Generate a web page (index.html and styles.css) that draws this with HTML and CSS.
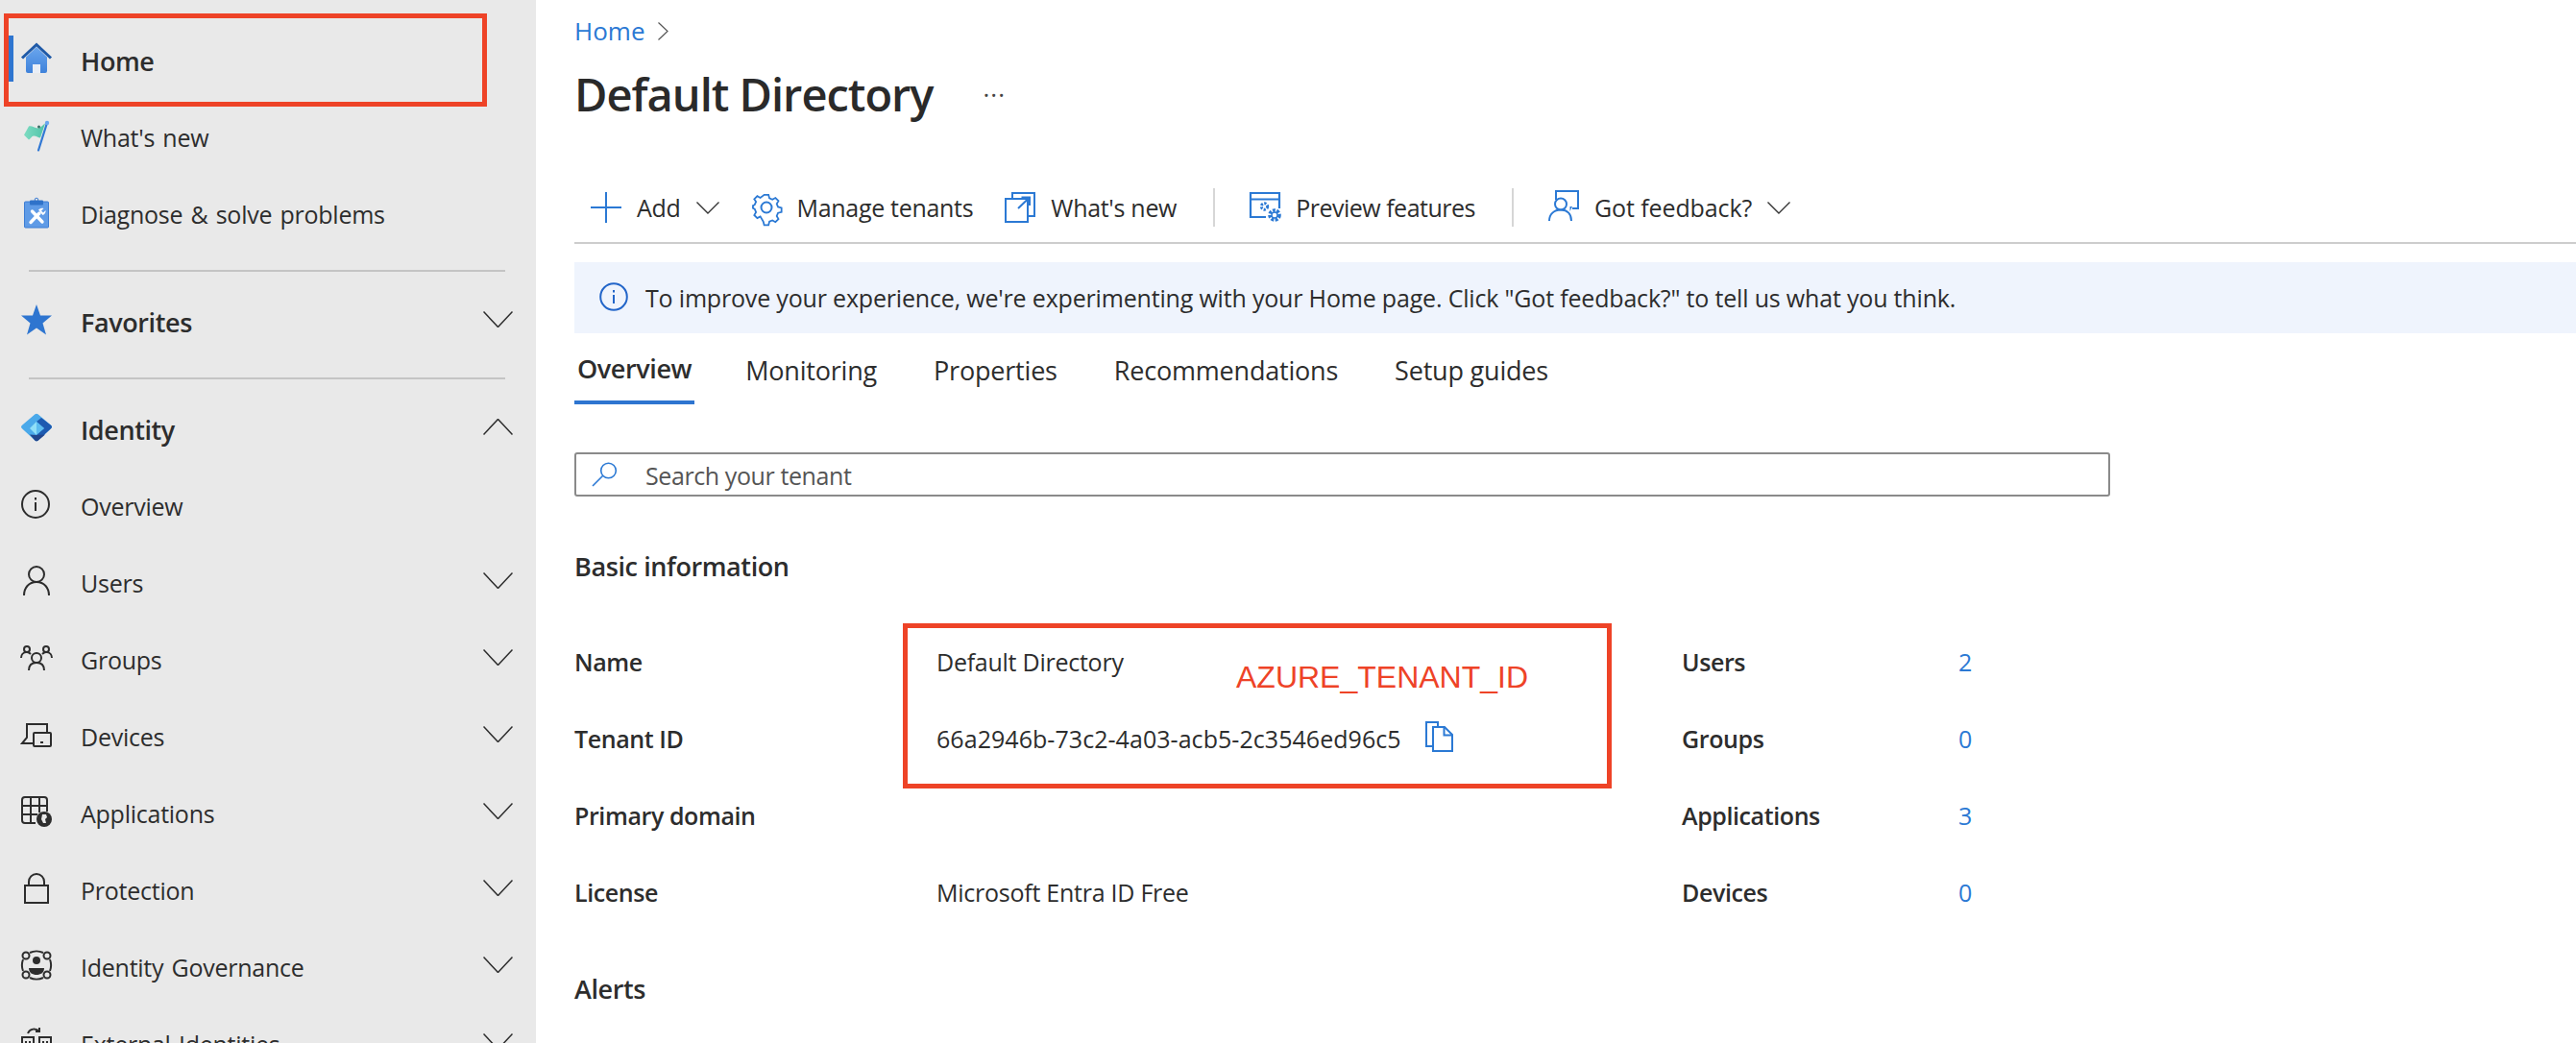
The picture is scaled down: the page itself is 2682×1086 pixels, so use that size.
FILE: index.html
```html
<!DOCTYPE html>
<html lang="en">
<head>
  <meta charset="UTF-8" />
  <meta name="viewport" content="width=device-width, initial-scale=1" />
  <title>Default Directory - Overview</title>
  <link rel="stylesheet" href="styles.css">
</head>
<body>
<div class="page">

  <aside class="side">
    <a class="side-item bold current">
      <svg class="ico" viewBox="0 0 32 32"><defs><linearGradient id="homeGrad" x1="0" y1="0" x2="0" y2="1"><stop offset="0" stop-color="#6aa6ee"/><stop offset="1" stop-color="#3f82da"/></linearGradient></defs><path d="M5 14.500 16 4l11 10.500V29a2 2 0 0 1-2 2H7a2 2 0 0 1-2-2z" fill="url(#homeGrad)"/><path d="M12 31V22h8v9z" fill="#e9eef6"/><path d="M1 15.500 16 1.500l15 14" fill="none" stroke="#1f5aa8" stroke-width="3"/></svg>
      <span>Home</span>
    </a>
    <a class="side-item">
      <svg class="ico" viewBox="0 0 32 32"><defs><linearGradient id="flagGrad" x1="0" y1="0" x2="1" y2="0"><stop offset="0" stop-color="#7edcc2"/><stop offset="1" stop-color="#4fc3a8"/></linearGradient></defs><path d="M3 15.500 8 6.500c3-1 6 2 9 2s5-3 8-5l-5 15c-2 0-4-2-7-2-2 0-3 3-5 4z" fill="url(#flagGrad)"/><circle cx="18.500" cy="7" r="1.500" fill="#3c6e66"/><path d="M27 3 18 31.500" fill="none" stroke="#3178d4" stroke-width="2.200" stroke-linecap="round"/><circle cx="27" cy="3" r="2.200" fill="#6aa6ee"/></svg>
      <span>What's new</span>
    </a>
    <a class="side-item">
      <svg class="ico" viewBox="0 0 32 32"><rect x="3.500" y="5" width="25" height="27" rx="1" fill="#5f9be6" stroke="#3d7dd4"/><circle cx="16" cy="3" r="1.800" fill="none" stroke="#3d7dd4"/><rect x="9" y="3.500" width="14" height="5" rx="1" fill="#2f72c9"/><path d="M11.500 15 22 26" fill="none" stroke="#fff" stroke-width="3.400" stroke-linecap="round"/><path d="M10 26.500 19 17" fill="none" stroke="#fff" stroke-width="3.400" stroke-linecap="round"/><path d="M18 13.500c2-2 4-2 5.500-1.500l-2.500 2.500 2 2 2.500-2.500c.5 2-1 4.500-3 5z" fill="#fff"/></svg>
      <span>Diagnose &amp; solve problems</span>
    </a>

    <hr class="side-rule">

    <a class="side-item bold">
      <svg class="ico" viewBox="0 0 32 32"><path d="M16 0 20 11.500H32L22.500 19.500 26 31.500 16 24.500 6 31.500 9.500 19.500 0 11.500H12z" fill="#2e75d0"/></svg>
      <span>Favorites</span>
      <svg class="chev" viewBox="0 0 31 17"><path d="M.5.500 15.500 16.500 30.500.500"/></svg>
    </a>

    <hr class="side-rule">

    <a class="side-item bold">
      <svg class="ico" viewBox="0 0 32 32"><path d="M14.500 2.200a2.500 2.500 0 0 1 3 0L31 13.700a2.200 2.200 0 0 1 0 3.600L17.500 29.800a2.500 2.500 0 0 1-3 0L1 17.300a2.200 2.200 0 0 1 0-3.600z" fill="#4aa9ea"/><path d="M21 6 31 13.700a2.200 2.200 0 0 1 0 3.600L17.500 29.800l-5-3.500L24 17l-8-7z" fill="#1d5ab0"/><path d="M9 23.500 14.500 29.800a2.500 2.500 0 0 0 3 0L25 23.500 16 24z" fill="#22468c"/><path d="M16 10 9 17l7 7z" fill="#8fdff8"/><path d="M16 10 24 17l-8 7z" fill="#5cbcf0"/></svg>
      <span>Identity</span>
      <svg class="chev" viewBox="0 0 31 17"><path d="M.5 16.500 15.500.500 30.500 16.500"/></svg>
    </a>
    <a class="side-item">
      <svg class="ico line" viewBox="0 0 32 32"><circle cx="15" cy="16" r="14"/><path d="M15 14v9M15 9v2.500"/></svg>
      <span>Overview</span>
    </a>
    <a class="side-item">
      <svg class="ico line" viewBox="0 0 32 32"><circle cx="16" cy="9" r="8"/><path d="M3 31c0-8 5-14 13-14s13 6 13 14"/></svg>
      <span>Users</span>
      <svg class="chev" viewBox="0 0 31 17"><path d="M.5.500 15.500 16.500 30.500.500"/></svg>
    </a>
    <a class="side-item">
      <svg class="ico line" viewBox="0 0 32 32"><circle cx="16" cy="16" r="5"/><path d="M8 29c0-5 3-8 8-8s8 3 8 8"/><circle cx="6" cy="7" r="3"/><circle cx="26" cy="7" r="3"/><path d="M0 16c0-3 2-6 6-6 2 0 3 1 4 2M32 16c0-3-2-6-6-6-2 0-3 1-4 2"/></svg>
      <span>Groups</span>
      <svg class="chev" viewBox="0 0 31 17"><path d="M.5.500 15.500 16.500 30.500.500"/></svg>
    </a>
    <a class="side-item">
      <svg class="ico line" viewBox="0 0 32 32"><path d="M13 25H1l5-6V5h21v9"/><rect x="13" y="14" width="18" height="14" rx="1"/><path d="M20 24h3"/></svg>
      <span>Devices</span>
      <svg class="chev" viewBox="0 0 31 17"><path d="M.5.500 15.500 16.500 30.500.500"/></svg>
    </a>
    <a class="side-item">
      <svg class="ico line" viewBox="0 0 32 32"><path d="M15 28H4a3 3 0 0 1-3-3V4a3 3 0 0 1 3-3h20a3 3 0 0 1 3 3v12M1 10h26M1 19h16M10 1v27M19 1v16"/><circle class="fill" cx="24" cy="24" r="8"/><path class="knock" d="M22 19h4l1 3-2 2 1 4h-3l-2-4z"/></svg>
      <span>Applications</span>
      <svg class="chev" viewBox="0 0 31 17"><path d="M.5.500 15.500 16.500 30.500.500"/></svg>
    </a>
    <a class="side-item">
      <svg class="ico line" viewBox="0 0 32 32"><rect x="4" y="13" width="24" height="18"/><path d="M8 13V9a8 8 0 0 1 16 0v4"/></svg>
      <span>Protection</span>
      <svg class="chev" viewBox="0 0 31 17"><path d="M.5.500 15.500 16.500 30.500.500"/></svg>
    </a>
    <a class="side-item">
      <svg class="ico line" viewBox="0 0 32 32"><circle cx="5" cy="6" r="3.500"/><circle cx="27" cy="6" r="3.500"/><circle cx="5" cy="26" r="3.500"/><circle cx="27" cy="26" r="3.500"/><path d="M9 3c4-2 10-2 14 0M9 29c4 2 10 2 14 0M2 10c-1.500 4-1.500 8 0 12M30 10c1.500 4 1.500 8 0 12"/><circle class="fill" cx="16" cy="11" r="4"/><path class="fill" d="M8 19h16c0 5-4 7-8 7s-8-2-8-7z"/></svg>
      <span>Identity Governance</span>
      <svg class="chev" viewBox="0 0 31 17"><path d="M.5.500 15.500 16.500 30.500.500"/></svg>
    </a>
    <a class="side-item">
      <svg class="ico line" viewBox="0 0 32 32"><rect x="1" y="11" width="12" height="20"/><rect x="19" y="11" width="12" height="20"/><path d="M7 7c2-5 8-6 12-2M19 1v4h-4M4 16h2M8 16h2M22 16h2M26 16h2M4 20h2M8 20h2M22 20h2M26 20h2"/></svg>
      <span>External Identities</span>
      <svg class="chev" viewBox="0 0 31 17"><path d="M.5.500 15.500 16.500 30.500.500"/></svg>
    </a>
  </aside>

  <main class="main">
    <div class="crumbs">
      <a class="link">Home</a>
      <svg class="crumb-chev" viewBox="0 0 11 19"><path d="M.5.500 10 9.500.5 18.500"/></svg>
    </div>

    <div class="title-row">
      <h1>Default Directory</h1>
      <span class="more">&middot;&middot;&middot;</span>
    </div>

    <div class="toolbar">
      <a class="tool tool-add">
        <svg class="tool-ico" viewBox="0 0 32 32"><path d="M16 0v32M0 16h32" fill="none" stroke="#2b79d4" stroke-width="2"/></svg>
        <span>Add</span>
        <svg class="tool-chev" viewBox="0 0 24 13"><path d="M.5.500 12 12 23.500.500"/></svg>
      </a>
      <a class="tool">
        <svg class="tool-ico blue" viewBox="0 0 32 32"><circle cx="16" cy="16" r="5.500"/><path d="M13.500 1.500h5l1 4 3.500 1.500 3.500-2 3.500 3.500-2 3.500 1.500 3.500 4 1v5l-4 1-1.500 3.500 2 3.500-3.500 3.500-3.500-2-3.500 1.500-1 4h-5l-1-4L9 26.500l-3.500 2L2 25l2-3.500L2.500 18l-2-1v-3l2-1L4 9.500l-2-3L5.500 3 9 5z" transform="translate(1.500 1.500) scale(.9)"/></svg>
        <span>Manage tenants</span>
      </a>
      <a class="tool">
        <svg class="tool-ico blue" viewBox="0 0 32 32"><path d="M8 7V1h23v24h-7"/><rect x="1" y="7" width="23" height="24"/><path d="M13 17 24.500 6M16.500 5.500h8.500v8.500" transform="translate(1 0)"/></svg>
        <span>What's new</span>
      </a>
      <i class="tool-sep"></i>
      <a class="tool tool-preview">
        <svg class="tool-ico blue" viewBox="0 0 32 32"><path d="M17 26H1V1h30v16M1 7.500h30" stroke-width="2.200"/><circle cx="15.500" cy="15" r="3.200" stroke-width="3" stroke-dasharray="2.200 1.400"/><circle cx="26" cy="24" r="5" stroke-width="3.600" stroke-dasharray="2.800 1.400"/><circle cx="26" cy="24" r="3" stroke-width="1.400"/></svg>
        <span>Preview features</span>
      </a>
      <i class="tool-sep"></i>
      <a class="tool tool-feedback">
        <svg class="tool-ico blue" viewBox="0 0 32 32"><path d="M8 8V-1h23v18h-6"/><path d="M31 15h-6l-2.500 5v-5z" fill="#2b79d4" stroke="none"/><circle cx="13" cy="12.500" r="6"/><path d="M1 30c0-7 5-11.500 12-11.500S24 23 24 30"/></svg>
        <span>Got feedback?</span>
        <svg class="tool-chev" viewBox="0 0 24 13"><path d="M.5.500 12 12 23.500.500"/></svg>
      </a>
    </div>

    <div class="banner">
      <svg class="banner-ico" viewBox="0 0 30 30"><circle cx="15" cy="15" r="13.800"/><path d="M15 13v9M15 8v2.500"/></svg>
      <span>To improve your experience, we're experimenting with your Home page. Click "Got feedback?" to tell us what you think.</span>
    </div>

    <div class="tabs">
      <a class="tab active">Overview</a>
      <a class="tab">Monitoring</a>
      <a class="tab">Properties</a>
      <a class="tab">Recommendations</a>
      <a class="tab">Setup guides</a>
    </div>

    <div class="search">
      <svg class="search-ico" viewBox="0 0 27 26"><circle cx="17.500" cy="9" r="7.800"/><path d="M11.500 14.500 1 25"/></svg>
      <span>Search your tenant</span>
    </div>

    <h2 class="section-head">Basic information</h2>

    <div class="info-grid">
      <div class="label">Name</div>
      <div class="value">Default Directory</div>
      <div class="label">Users</div>
      <a class="link">2</a>

      <div class="label">Tenant ID</div>
      <div class="value tenant">
        <span>66a2946b-73c2-4a03-acb5-2c3546ed96c5</span>
        <svg class="copy-ico" viewBox="0 0 29 32"><path d="M7 26H1V1h12v5"/><path d="M8 6h12l8 8v17H8z"/><path d="M19.500 6v8.500H28"/></svg>
      </div>
      <div class="label">Groups</div>
      <a class="link">0</a>

      <div class="label">Primary domain</div>
      <div class="value"></div>
      <div class="label">Applications</div>
      <a class="link">3</a>

      <div class="label">License</div>
      <div class="value">Microsoft Entra ID Free</div>
      <div class="label">Devices</div>
      <a class="link">0</a>
    </div>

    <h2 class="section-head alerts">Alerts</h2>
  </main>

  <!-- red annotations drawn on top of the screenshot -->
  <div class="mark mark-home"></div>
  <div class="mark mark-tenant"></div>
  <div class="mark-text">AZURE_TENANT_ID</div>
</div>
</body>
</html>
```

FILE: styles.css
```css
* { margin: 0; padding: 0; box-sizing: border-box; }
html, body { height: 100%; overflow: hidden; background: #fff; }
body { font-family: 'Open Sans', 'Noto Sans', sans-serif; font-size: 25px; color: #2d2d2d; }
a { color: inherit; text-decoration: none; }

.page { position: relative; display: flex; height: 1086px; overflow: hidden; }

/* left menu */
.side { flex: 0 0 558px; height: 1086px; padding-top: 23px; background: #e9e9e9; overflow: hidden; }
.side-item { position: relative; display: flex; align-items: center; gap: 30px; height: 80px; padding: 0 24px 0 22px; letter-spacing: -0.25px; word-spacing: 2px; }
.side-item.bold { font-size: 27px; font-weight: 600; letter-spacing: -0.4px; }
.side-item.current::before { content: ''; position: absolute; left: 8px; top: 14px; width: 6px; height: 48px; background: #2e75d0; }
.ico { flex: 0 0 32px; width: 32px; height: 32px; margin-top: -5px; overflow: visible; }
.ico.line { fill: none; stroke: #2d2d2d; stroke-width: 2; }
.ico .fill { fill: #2d2d2d; stroke: none; }
.ico .knock { fill: #e9e9e9; stroke: none; }
.chev { width: 31px; height: 17px; margin-left: auto; margin-top: -5px; fill: none; stroke: #2d2d2d; stroke-width: 1.5; }
.side-rule { height: 2px; margin: 18px 32px 12px 30px; border: 0; background: #c4c4c4; }

/* right side */
.main { flex: 1; min-width: 0; padding: 16px 0 0 40px; }
.link { color: #2b79d4; }
.crumbs { display: flex; align-items: center; gap: 14px; height: 32px; font-size: 26px; }
.crumb-chev { width: 11px; height: 19px; fill: none; stroke: #555; stroke-width: 1.2; }

.title-row { display: flex; align-items: center; height: 64px; margin-top: 18px; }
h1 { font-size: 47px; font-weight: 600; letter-spacing: -1px; color: #2a2a2a; }
.more { margin-left: 52px; font-size: 26px; letter-spacing: 1px; color: #444; }

.toolbar { display: flex; align-items: center; height: 72px; margin-top: 52px; padding: 0 0 2px 17px; border-bottom: 2px solid #cdcdcd; letter-spacing: -0.3px; }
.tool { display: flex; align-items: center; gap: 16px; margin-right: 33px; }
.tool-preview { letter-spacing: -0.5px; }
.tool-feedback { letter-spacing: -0.1px; }
.tool-ico { width: 32px; height: 32px; overflow: visible; }
.tool-ico.blue { fill: none; stroke: #2b79d4; stroke-width: 2; }
.tool-chev { width: 24px; height: 13px; fill: none; stroke: #333; stroke-width: 1.4; }
.tool-sep { width: 2px; height: 40px; margin: 0 36px 0 5px; background: #d6d6d6; }

.banner { display: flex; align-items: center; gap: 18px; height: 74px; margin-top: 19px; padding-left: 26px; background: #eff4fd; letter-spacing: -0.18px; }
.banner-ico { flex: 0 0 30px; width: 30px; height: 30px; margin-top: -2px; fill: none; stroke: #2265c9; stroke-width: 2; }

.tabs { display: flex; gap: 53px; height: 74px; font-size: 27px; letter-spacing: -0.2px; }
.tab { display: flex; align-items: center; height: 74px; padding: 2px 3px 0; }
.tab.active { margin-right: -3px; font-weight: 600; letter-spacing: -0.4px; border-bottom: 4px solid #2e75d0; }

.search { display: flex; align-items: center; gap: 29px; width: 1599px; height: 46px; margin-top: 50px; padding-left: 16px; border: 2px solid #8a8a8a; border-radius: 3px; color: #555; letter-spacing: -0.4px; }
.search span { margin-top: 2px; }
.search-ico { width: 27px; height: 26px; fill: none; stroke: #2b79d4; stroke-width: 1.6; }

.section-head { height: 40px; margin-top: 53px; font-size: 27px; font-weight: 600; line-height: 40px; letter-spacing: -0.4px; }
.section-head.alerts { margin-top: 41px; }

.info-grid { display: grid; grid-template-columns: 377px 776px 288px 1fr; grid-auto-rows: 80px; margin-top: 39px; align-items: center; letter-spacing: -0.4px; }
.label { font-weight: 600; }
.value { letter-spacing: -0.25px; }
.tenant { display: flex; align-items: center; gap: 25px; letter-spacing: 0.05px; }
.copy-ico { width: 29px; height: 32px; margin-top: -4px; fill: none; stroke: #2b79d4; stroke-width: 2; }

/* annotations */
.mark { position: absolute; border: 5px solid #ee4327; }
.mark-home { left: 4px; top: 14px; width: 503px; height: 97px; }
.mark-tenant { left: 940px; top: 649px; width: 738px; height: 172px; }
.mark-text { position: absolute; left: 1287px; top: 687px; font-family: 'Liberation Sans', Arial, sans-serif; font-size: 32px; line-height: 36px; color: #ee4327; }
```
